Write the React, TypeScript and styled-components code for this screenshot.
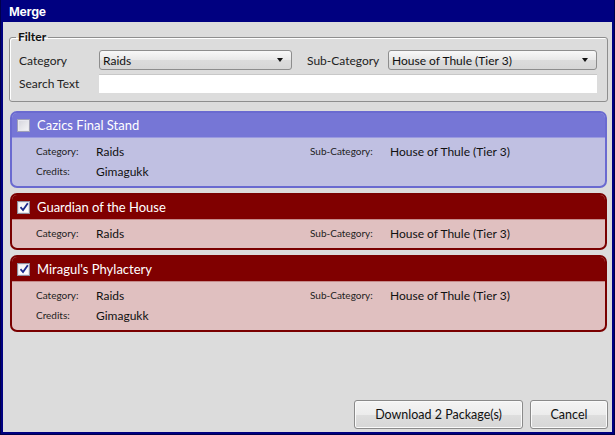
import React from "react";
import styled, { createGlobalStyle } from "styled-components";

const GlobalStyle = createGlobalStyle`
  html, body {
    margin: 0;
    padding: 0;
    background: #000080;
  }
  body {
    font-family: "Lato", "Open Sans", sans-serif;
  }
`;

type Tone = "blue" | "red";

const tones = {
  blue: { head: "#7676d6", body: "#c0c0e2", border: "#6a6ad0", line: "#9a9ae0" },
  red: { head: "#800000", body: "#e0c0c0", border: "#7a0000", line: "#c58a8a" },
};

const packages = [
  { title: "Cazics Final Stand", checked: false, category: "Raids", sub: "House of Thule (Tier 3)", credits: "Gimagukk" },
  { title: "Guardian of the House", checked: true, category: "Raids", sub: "House of Thule (Tier 3)" },
  { title: "Miragul's Phylactery", checked: true, category: "Raids", sub: "House of Thule (Tier 3)", credits: "Gimagukk" },
];

const App = () => {
  const selected = packages.filter((p) => p.checked).length;

  return (
    <>
      <GlobalStyle />
      <Window>
        <TitleBar>Merge</TitleBar>
        <Content>
          <Group>
            <Legend>Filter</Legend>
            <FilterGrid>
              <FieldLabel>Category</FieldLabel>
              <Combo>
                <span>Raids</span>
                <Arrow />
              </Combo>
              <FieldLabel $indent>Sub-Category</FieldLabel>
              <Combo>
                <span>House of Thule (Tier 3)</span>
                <Arrow />
              </Combo>
              <FieldLabel>Search Text</FieldLabel>
              <TextBox />
            </FilterGrid>
          </Group>

          <CardList>
            {packages.map((p) => {
              const tone: Tone = p.checked ? "red" : "blue";
              return (
                <Card key={p.title} $tone={tone}>
                  <CardHead $tone={tone}>
                    <Check $checked={p.checked}>
                      {p.checked && (
                        <svg width="10" height="10" viewBox="0 0 10 10">
                          <path d="M1.5 5.2 L4 8 L8.8 1.2" fill="none" stroke="#1c2a8c" strokeWidth="1.8" />
                        </svg>
                      )}
                    </Check>
                    <CardTitle>{p.title}</CardTitle>
                  </CardHead>
                  <CardBody $tone={tone}>
                    <SmallLabel>Category:</SmallLabel>
                    <Value>{p.category}</Value>
                    <SmallLabel>Sub-Category:</SmallLabel>
                    <Value>{p.sub}</Value>
                    {p.credits && (
                      <>
                        <SmallLabel>Credits:</SmallLabel>
                        <Value>{p.credits}</Value>
                      </>
                    )}
                  </CardBody>
                </Card>
              );
            })}
          </CardList>

          <Footer>
            <Button $width={169}>Download {selected} Package(s)</Button>
            <Button $width={78}>Cancel</Button>
          </Footer>
        </Content>
      </Window>
    </>
  );
};

const Window = styled.div`
  width: 615px;
  height: 435px;
  box-sizing: border-box;
  display: flex;
  flex-direction: column;
  background: #000080;
  border: 1px solid #00004a;
  border-top: none;
  padding: 0 2px 2px 2px;
`;

const TitleBar = styled.div`
  height: 22px;
  line-height: 24px;
  padding-left: 6px;
  color: #ffffff;
  font-weight: bold;
  font-size: 13px;
  font-family: "Liberation Sans", "Lato", sans-serif;
  letter-spacing: -0.3px;
`;

const Content = styled.div`
  flex: 1;
  display: flex;
  flex-direction: column;
  background: #dcdcdc;
  padding: 0 4px 3px 6px;
  font-size: 12px;
  color: #1a1a1a;
`;

const Group = styled.fieldset`
  margin: 8px 0 0 0;
  padding: 6px 8px 9px 9px;
  border: 1px solid #8e8e8e;
  border-radius: 3px;
  box-shadow: inset 1px 1px 0 #ffffff;
`;

const Legend = styled.legend`
  padding: 0 2px;
  margin-left: -3px;
  font-weight: bold;
  font-size: 12px;
  line-height: 14px;
  color: #111;
`;

const FilterGrid = styled.div`
  display: grid;
  grid-template-columns: 80px 193px 96px 209px;
  grid-template-rows: 20px 18px;
  row-gap: 4px;
  align-items: center;
`;

const FieldLabel = styled.span<{ $indent?: boolean }>`
  font-size: 12px;
  color: #222;
  padding-left: ${(p) => (p.$indent ? "15px" : "0")};
`;

const Combo = styled.div`
  height: 20px;
  box-sizing: border-box;
  display: flex;
  align-items: center;
  justify-content: space-between;
  padding: 0 8px 0 3px;
  border: 1px solid #8d8d8d;
  border-radius: 3px;
  background: linear-gradient(#f8f8f8, #e8e8e8 50%, #dcdcdc 51%, #d6d6d6);
  font-size: 12px;
  color: #111;
`;

const Arrow = styled.span`
  width: 0;
  height: 0;
  border-left: 3.5px solid transparent;
  border-right: 3.5px solid transparent;
  border-top: 4px solid #111;
`;

const TextBox = styled.div`
  grid-column: 2 / 5;
  height: 18px;
  background: #ffffff;
  border-top: 1px solid #c8c8c8;
`;

const CardList = styled.div`
  display: flex;
  flex-direction: column;
  gap: 5px;
  margin: 9px 1px 0 1px;
`;

const Card = styled.div<{ $tone: Tone }>`
  border: 2px solid ${(p) => tones[p.$tone].border};
  border-radius: 7px;
  overflow: hidden;
  background: ${(p) => tones[p.$tone].body};
`;

const CardHead = styled.div<{ $tone: Tone }>`
  height: 24px;
  display: flex;
  align-items: center;
  gap: 7px;
  padding-left: 5px;
  background: ${(p) => tones[p.$tone].head};
  border-bottom: 1px solid ${(p) => tones[p.$tone].line};
`;

const Check = styled.span<{ $checked: boolean }>`
  width: 11px;
  height: 11px;
  display: flex;
  align-items: center;
  justify-content: center;
  border: 1px solid ${(p) => (p.$checked ? "#8f8f9f" : "#a0a0b8")};
  background: ${(p) =>
    p.$checked ? "linear-gradient(#f4f4f4, #ffffff)" : "linear-gradient(135deg, #d4d4dc, #f6f6f8)"};
  box-shadow: inset 0 0 0 1px ${(p) => (p.$checked ? "#e6e6ee" : "#e8e8ee")};
`;

const CardTitle = styled.span`
  color: #ffffff;
  font-size: 13px;
  line-height: 16px;
`;

const CardBody = styled.div<{ $tone: Tone }>`
  display: grid;
  grid-template-columns: 60px 214px 80px 1fr;
  grid-auto-rows: 20px;
  align-items: center;
  padding: 3px 0 5px 24px;
`;

const SmallLabel = styled.span`
  font-size: 10px;
  color: #222;
`;

const Value = styled.span`
  font-size: 12px;
  color: #111;
`;

const Footer = styled.div`
  margin-top: auto;
  display: flex;
  justify-content: flex-end;
  gap: 7px;
`;

const Button = styled.button<{ $width: number }>`
  width: ${(p) => p.$width}px;
  height: 29px;
  border: 1px solid #8a8a8a;
  border-radius: 3px;
  background: linear-gradient(#f4f4f4, #ececec 50%, #dedede 51%, #d6d6d6);
  box-shadow: inset 0 0 0 1px #fafafa;
  font-family: "Lato", "Open Sans", sans-serif;
  font-size: 12.5px;
  color: #111;
  padding: 0;
`;

export default App;
